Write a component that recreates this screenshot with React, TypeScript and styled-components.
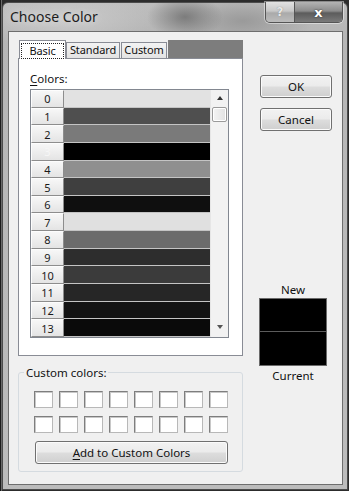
import styled, { createGlobalStyle } from 'styled-components';

const GlobalStyle = createGlobalStyle`
  html, body { margin: 0; padding: 0; }
  body {
    background: #2c2c2c;
    font-family: 'Noto Sans', 'Open Sans', sans-serif;
    font-size: 11px;
    color: #1a1a1a;
  }
`;

const BASIC_COLORS = [
  '#e2e2e2', '#4f4f4f', '#7a7a7a', '#000000', '#8f8f8f', '#3f3f3f', '#0f0f0f',
  '#e0e0e0', '#6b6b6b', '#2d2d2d', '#3b3b3b', '#262626', '#131313', '#0a0a0a',
];

const SELECTED = 3;

const Screen = styled.div`
  width: 349px;
  height: 491px;
  box-sizing: border-box;
  padding: 2px 1px 1px 2px;
  background: linear-gradient(90deg, #1c1c1c 0 1px, #6a6a6a 1px 2px, #2c2c2c 2px);
`;

const Window = styled.div`
  height: 100%;
  box-sizing: border-box;
  border: 1px solid #4c4c4c;
  border-radius: 6px 6px 0 0;
  padding: 0 4px 4px 5px;
  display: flex;
  flex-direction: column;
  background:
    radial-gradient(ellipse 38px 22px at 182px 14px, #7c7c7c, rgba(124, 124, 124, 0)),
    radial-gradient(ellipse 70px 26px at 240px 18px, #9a9a9a, rgba(154, 154, 154, 0)),
    radial-gradient(ellipse 90px 30px at 60px 16px, #cacaca, rgba(202, 202, 202, 0)),
    linear-gradient(180deg, #bdbdbd 0, #b6b6b6 30px, #bcbcbc 100%);
`;

const TitleBar = styled.div`
  height: 28px;
  display: flex;
  justify-content: space-between;
  align-items: flex-start;
`;

const Title = styled.div`
  padding: 5px 0 0 2px;
  font-size: 14px;
  line-height: 18px;
  color: #1c1c1c;
  text-shadow: 0 0 8px rgba(255, 255, 255, 0.7);
`;

const CaptionGroup = styled.div`
  display: flex;
  margin-top: -1px;
  border: 1px solid #555;
  border-top: none;
  border-radius: 0 0 5px 5px;
  overflow: hidden;
  box-shadow: 0 0 0 1px rgba(255, 255, 255, 0.45);
`;

const CaptionButton = styled.div<{ $close?: boolean }>`
  width: ${({ $close }) => ($close ? 47 : 28)}px;
  height: 20px;
  display: flex;
  align-items: center;
  justify-content: center;
  border-left: ${({ $close }) => ($close ? '1px solid #555' : 'none')};
  background: ${({ $close }) =>
    $close
      ? 'linear-gradient(180deg, #b4b4b4 0, #8c8c8c 45%, #5c5c5c 55%, #7a7a7a 100%)'
      : 'linear-gradient(180deg, #e2e2e2 0, #c8c8c8 45%, #aaaaaa 55%, #bcbcbc 100%)'};
  color: ${({ $close }) => ($close ? '#fff' : '#e8e8e8')};
  font-family: 'DejaVu Sans', sans-serif;
  font-weight: bold;
  font-size: ${({ $close }) => ($close ? 13 : 12)}px;
  text-shadow: ${({ $close }) => ($close ? '0 0 1px #333, 0 0 2px #444' : '0 0 1px #777')};
`;

const Client = styled.div`
  flex: 1;
  box-sizing: border-box;
  background: #f0f0f0;
  border: 1px solid #6e6e6e;
  padding: 8px 0 0 9px;
  display: flex;
`;

const LeftColumn = styled.div`
  width: 225px;
  display: flex;
  flex-direction: column;
`;

const TabStrip = styled.div`
  height: 18px;
  display: flex;
  align-items: flex-end;
  padding-left: 1px;
`;

const Tab = styled.div<{ $active?: boolean; $width: number }>`
  box-sizing: border-box;
  width: ${({ $width }) => $width}px;
  height: ${({ $active }) => ($active ? 19 : 16)}px;
  margin-bottom: ${({ $active }) => ($active ? -1 : 0)}px;
  padding: ${({ $active }) => ($active ? '2px 1px 0' : '0')};
  border: 1px solid #898c95;
  border-bottom: none;
  margin-right: ${({ $active }) => ($active ? 0 : 1)}px;
  background: ${({ $active }) => ($active ? '#fff' : 'linear-gradient(180deg, #f3f3f3, #e3e3e3)')};
  position: relative;
  z-index: ${({ $active }) => ($active ? 1 : 0)};
  text-align: center;
  font-size: 11px;
  line-height: 14px;
  letter-spacing: -0.1px;
  color: #111;
`;

const FocusRect = styled.span`
  display: block;
  height: 14px;
  border: 1px dotted #222;
`;

const TabFiller = styled.div`
  flex: 1;
  height: 18px;
  background: #7d7d7d;
`;

const Panel = styled.div`
  height: 298px;
  box-sizing: border-box;
  border: 1px solid #898c95;
  background: #fff;
  padding: 12px 0 0 11px;
`;

const FieldLabel = styled.div`
  font-size: 11.5px;
  line-height: 15px;
  margin-bottom: 3px;
  color: #111;
`;

const Accel = styled.span`
  text-decoration: underline;
  text-underline-offset: 2px;
`;

const ListBox = styled.div`
  width: 199px;
  height: 249px;
  box-sizing: border-box;
  border: 1px solid #828790;
  display: flex;
`;

const Rows = styled.div`
  flex: 1;
  display: grid;
  grid-template-rows: repeat(14, 1fr);
`;

const Row = styled.div`
  display: grid;
  grid-template-columns: 33px 1fr;
`;

const RowHeader = styled.div<{ $selected?: boolean }>`
  box-sizing: border-box;
  border: 1px solid;
  border-color: #fdfdfd #8d8d8d #8d8d8d #fdfdfd;
  background: linear-gradient(180deg, #f7f7f7, #e4e4e4);
  display: flex;
  align-items: center;
  justify-content: center;
  font-size: 11px;
  color: ${({ $selected }) => ($selected ? '#f6f6f6' : '#1a1a1a')};
`;

const Swatch = styled.div`
  border-bottom: 1px solid #c4c4c4;
`;

const ScrollBar = styled.div`
  width: 17px;
  background: #f2f2f2;
  border-left: 1px solid #e6e6e6;
  display: flex;
  flex-direction: column;
  align-items: center;
`;

const Arrow = styled.div<{ $down?: boolean }>`
  width: 0;
  height: 0;
  margin: ${({ $down }) => ($down ? 'auto 0 8px' : '6px 0 0')};
  border-left: 3.5px solid transparent;
  border-right: 3.5px solid transparent;
  ${({ $down }) => ($down ? 'border-top: 4px solid #555;' : 'border-bottom: 4px solid #333;')}
`;

const Thumb = styled.div`
  width: 15px;
  height: 15px;
  margin-top: 7px;
  box-sizing: border-box;
  border: 1px solid #9a9a9a;
  border-radius: 2px;
  background: linear-gradient(90deg, #f4f4f4, #e2e2e2);
  box-shadow: inset 0 0 0 1px #fff;
`;

const GroupBox = styled.fieldset`
  margin: 9px 0 0;
  padding: 11px 0 7px 15px;
  border: 1px solid #d5dbe0;
  border-radius: 3px;
  min-width: 0;
`;

const GroupLegend = styled.legend`
  margin-left: -10px;
  padding: 0 2px;
  font-size: 11.5px;
  line-height: 15px;
  color: #111;
`;

const CustomGrid = styled.div`
  display: grid;
  grid-template-columns: repeat(8, 19px);
  grid-auto-rows: 17px;
  column-gap: 6px;
  row-gap: 8px;
`;

const CustomCell = styled.div`
  box-sizing: border-box;
  background: #fff;
  border: 1px solid;
  border-color: #7e7e7e #b8b8b8 #b8b8b8 #7e7e7e;
  box-shadow: inset 1px 1px 0 #c8c8c8;
`;

const PushButton = styled.div<{ $width: number }>`
  width: ${({ $width }) => $width}px;
  height: 23px;
  box-sizing: border-box;
  border: 1px solid #707070;
  border-radius: 3px;
  background: linear-gradient(180deg, #f2f2f2 0, #ebebeb 48%, #dddddd 52%, #cfcfcf 100%);
  box-shadow: inset 0 0 0 1px #fbfbfb;
  display: flex;
  align-items: center;
  justify-content: center;
  font-size: 11.5px;
  color: #111;
`;

const WideButton = styled(PushButton)`
  margin: 8px 0 0 1px;
`;

const RightColumn = styled.div`
  margin-left: 16px;
  padding-top: 35px;
  display: flex;
  flex-direction: column;
  align-items: flex-start;
`;

const DialogButton = styled(PushButton)`
  margin: 0 0 10px 1px;
`;

const Preview = styled.div`
  width: 68px;
  margin-top: 141px;
  display: flex;
  flex-direction: column;
  align-items: center;
`;

const PreviewLabel = styled.div`
  font-size: 11.5px;
  line-height: 15px;
  color: #111;
`;

const PreviewBox = styled.div`
  width: 68px;
  height: 68px;
  margin: 1px 0 2px;
  box-sizing: border-box;
  border: 1px solid #6a6a6a;
  display: grid;
  grid-template-rows: 1fr 1fr;
`;

const PreviewHalf = styled.div<{ $color: string; $top?: boolean }>`
  background: ${({ $color }) => $color};
  border-bottom: ${({ $top }) => ($top ? '1px solid #5c5c5c' : 'none')};
`;

export default function App() {
  return (
    <>
      <GlobalStyle />
      <Screen>
        <Window>
          <TitleBar>
            <Title>Choose Color</Title>
            <CaptionGroup>
              <CaptionButton>?</CaptionButton>
              <CaptionButton $close>x</CaptionButton>
            </CaptionGroup>
          </TitleBar>
          <Client>
            <LeftColumn>
              <TabStrip>
                <Tab $active $width={47}>
                  <FocusRect>Basic</FocusRect>
                </Tab>
                <Tab $width={54}>Standard</Tab>
                <Tab $width={46}>Custom</Tab>
                <TabFiller />
              </TabStrip>
              <Panel>
                <FieldLabel>
                  <Accel>C</Accel>olors:
                </FieldLabel>
                <ListBox>
                  <Rows>
                    {BASIC_COLORS.map((color, i) => (
                      <Row key={i}>
                        <RowHeader $selected={i === SELECTED}>{i}</RowHeader>
                        <Swatch style={{ background: color }} />
                      </Row>
                    ))}
                  </Rows>
                  <ScrollBar>
                    <Arrow />
                    <Thumb />
                    <Arrow $down />
                  </ScrollBar>
                </ListBox>
              </Panel>
              <GroupBox>
                <GroupLegend>Custom colors:</GroupLegend>
                <CustomGrid>
                  {Array.from({ length: 16 }, (_, i) => (
                    <CustomCell key={i} />
                  ))}
                </CustomGrid>
                <WideButton $width={193}>
                  <Accel>A</Accel>dd to Custom Colors
                </WideButton>
              </GroupBox>
            </LeftColumn>
            <RightColumn>
              <DialogButton $width={72}>OK</DialogButton>
              <DialogButton $width={72}>Cancel</DialogButton>
              <Preview>
                <PreviewLabel>New</PreviewLabel>
                <PreviewBox>
                  <PreviewHalf $color="#000" $top />
                  <PreviewHalf $color="#000" />
                </PreviewBox>
                <PreviewLabel>Current</PreviewLabel>
              </Preview>
            </RightColumn>
          </Client>
        </Window>
      </Screen>
    </>
  );
}
